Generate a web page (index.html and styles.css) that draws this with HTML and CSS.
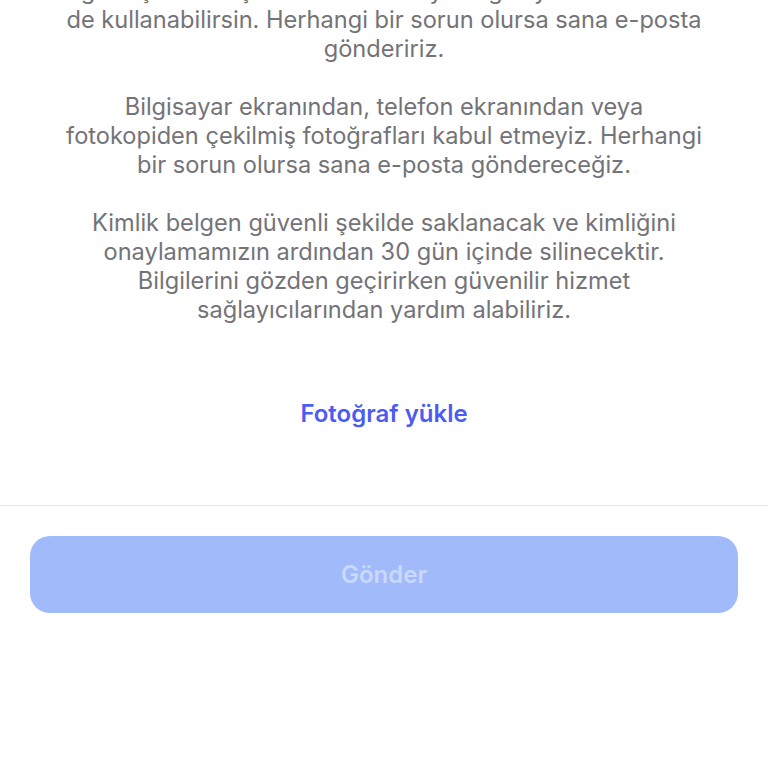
FILE: index.html
```html
<!DOCTYPE html>
<html lang="tr">
<head>
    <meta charset="UTF-8">
    <meta name="viewport" content="width=device-width, initial-scale=1.0">
    <title>Kimlik doğrulama</title>
    <link rel="stylesheet" href="styles.css">
</head>
<body>

    <div class="info">
        <p>Fotoğrafı çekmek için telefonunu veya bilgisayarının kamerasını<br>
        de kullanabilirsin. Herhangi bir sorun olursa sana e-posta<br>
        göndeririz.</p>

        <p>Bilgisayar ekranından, telefon ekranından veya<br>
        fotokopiden çekilmiş fotoğrafları kabul etmeyiz. Herhangi<br>
        bir sorun olursa sana e-posta göndereceğiz.</p>

        <p>Kimlik belgen güvenli şekilde saklanacak ve kimliğini<br>
        onaylamamızın ardından 30 gün içinde silinecektir.<br>
        Bilgilerini gözden geçirirken güvenilir hizmet<br>
        sağlayıcılarından yardım alabiliriz.</p>
    </div>

    <div class="upload">
        <a href="#" class="upload-link">Fotoğraf yükle</a>
    </div>

    <div class="footer">
        <button class="send" disabled>Gönder</button>
    </div>

</body>
</html>
```

FILE: styles.css
```css
body {
    margin: 0;
    font-family: Inter, "Noto Sans", sans-serif;
    background-color: white;
    color: #737378;
    overflow: hidden;
}

.info {
    margin-top: -24px;
    text-align: center;
    font-size: 23.6px;
    line-height: 29px;
}

.info p {
    margin: 0 0 29px 0;
    white-space: nowrap;
}

.upload {
    display: flex;
    justify-content: center;
    padding-top: 46px;
    height: 106px;
}

.upload-link {
    color: #4c5cf2;
    font-weight: 600;
    font-size: 24px;
    line-height: 29px;
    text-decoration: none;
}

.footer {
    border-top: 1.5px solid #e6e6e8;
    padding: 30px 30px 0 30px;
}

.send {
    width: 100%;
    height: 77px;
    border: none;
    border-radius: 20px;
    background-color: #a1bbfa;
    color: #c9d8fc;
    font-family: Inter, "Noto Sans", sans-serif;
    font-size: 24px;
    font-weight: 600;
}
```
